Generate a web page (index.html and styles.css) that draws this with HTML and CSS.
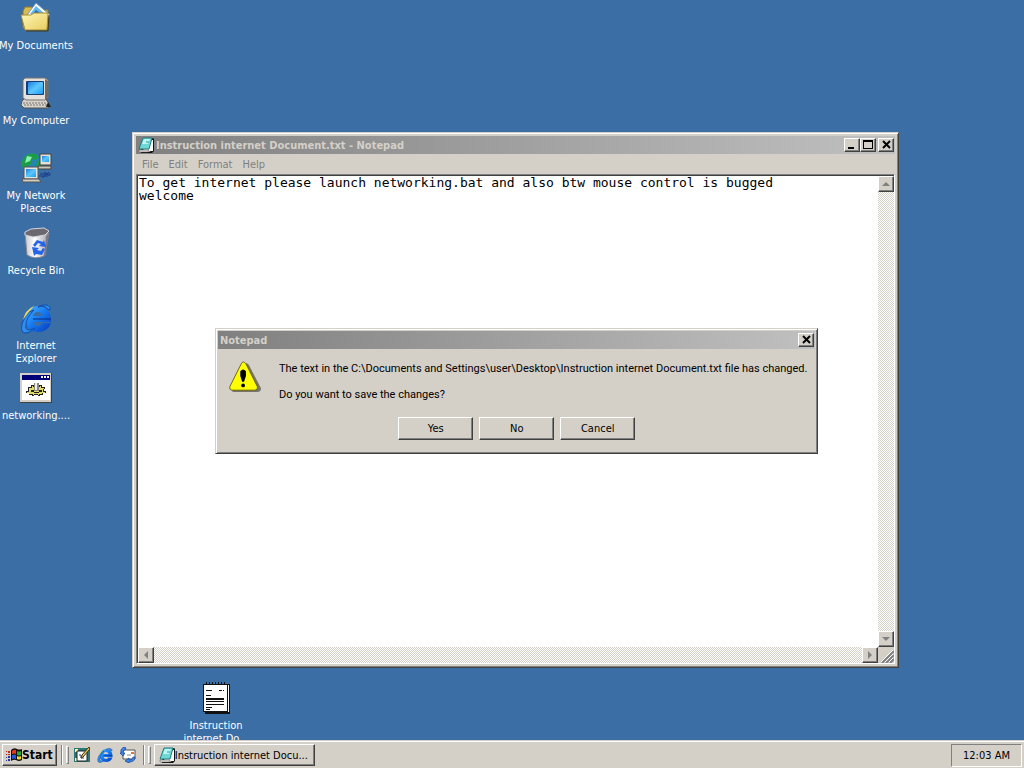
FILE: index.html
```html
<!DOCTYPE html>
<html lang="en">
<head>
<meta charset="utf-8">
<title>Desktop</title>
<link rel="stylesheet" href="styles.css">
</head>
<body>
<svg class="symbols" aria-hidden="true">
  <defs>
    <linearGradient id="screen" x1="0" y1="0" x2="1" y2="1">
      <stop offset="0" stop-color="#1d7fe0"/><stop offset=".5" stop-color="#5cc8ff"/><stop offset="1" stop-color="#1f9cf0"/>
    </linearGradient>
    <linearGradient id="folder" x1="0" y1="0" x2="1" y2="1">
      <stop offset="0" stop-color="#fff8b8"/><stop offset="1" stop-color="#e8cc60"/>
    </linearGradient>
    <linearGradient id="bin" x1="0" y1="0" x2="1" y2="0">
      <stop offset="0" stop-color="#c4c4cc"/><stop offset=".4" stop-color="#ffffff"/><stop offset="1" stop-color="#9c9cac"/>
    </linearGradient>
    <linearGradient id="blue-e" x1="0" y1="0" x2="1" y2="1">
      <stop offset="0" stop-color="#4cb8ff"/><stop offset=".5" stop-color="#1478f0"/><stop offset="1" stop-color="#0838b8"/>
    </linearGradient>
    <symbol id="i-computer" viewBox="0 0 32 32">
      <path d="M2 24l3-3h20l5 7-2 3H4l-3-3z" fill="#d8d4cc" stroke="#55504c"/>
      <path d="M3 26h23M4 28h23" stroke="#77726e" stroke-dasharray="2 1"/>
      <path d="M28 25l3 5h-5z" fill="#222"/>
      <path d="M3 3l2-2h20l3 2v17l-3 3H6l-3-2z" fill="#e4e0dc" stroke="#77706c"/>
      <path d="M25 2l3 2v16l-3 3z" fill="#716b68"/>
      <rect x="6" y="4" width="18" height="14" rx="1" fill="#183c78"/>
      <rect x="8" y="5" width="15" height="12" rx="1" fill="url(#screen)"/>
    </symbol>
    <symbol id="i-documents" viewBox="0 0 32 32">
      <path d="M3 9l2-4h7l2 3h14v18H3z" fill="#d8bc50" stroke="#8c7828"/>
      <path d="M7 13L16 1l14 12-6 9z" fill="#fff" stroke="#6c94bc"/>
      <path d="M10 12l6-8 9 8z" fill="#60b8ec"/>
      <path d="M13 12l3-4 5 4z" fill="#2c68a8"/>
      <path d="M1 13h10l3-2h14l-1 17H5z" fill="url(#folder)" stroke="#a88c30"/>
      <path d="M29 13l-1 16H6" fill="none" stroke="#40381c"/>
    </symbol>
    <symbol id="i-network" viewBox="0 0 32 32">
      <circle cx="12" cy="12" r="11" fill="#2484b4"/>
      <path d="M3 7Q8 0 16 2l3 3-4 3-3-1-1 5-4 2 1 6-4-2Q0 12 3 7zM17 9l4-1v7l-5 1z" fill="#1c9c44"/>
      <path d="M7 4l5 1-2 4-5 2z" fill="#8cf0b0"/>
      <path d="M20 2h11v11H20z" fill="#e4e0d4" stroke="#444"/>
      <path d="M22 4h7v6h-7z" fill="url(#screen)"/>
      <path d="M18 14h13v3H18z" fill="#c8c4b8" stroke="#444"/>
      <path d="M20 22h11M19 24h9M24 20l6 4M22 26l7-6" stroke="#183c88"/>
      <path d="M4 15h14v12H4z" fill="#e8e4d8" stroke="#555"/>
      <path d="M6 17h10v8H6z" fill="url(#screen)"/>
      <path d="M2 27h17l2 3H3z" fill="#d0ccc0" stroke="#555"/>
    </symbol>
    <symbol id="i-bin" viewBox="0 0 32 32">
      <path d="M5 6l2 22q8 5 17 1l5-23z" fill="url(#bin)" stroke="#888894"/>
      <path d="M26 9l3-3-3 22-2 2z" fill="#7c7884"/>
      <path d="M5 5l6-3 13-1 5 3-4 4-12 2-8-2z" fill="#6c6870" stroke="#d4d4dc"/>
      <path d="M13 18l4-5 6 2 1-2 2 7-7-1 2-2-3-1-3 4zM12 20l7 1-2 2 4 1 2-3 2 1-3 6-6-1-2 2z" fill="#2464e8"/>
    </symbol>
    <symbol id="i-ie" viewBox="0 0 32 32">
      <path d="M18 4C10 4 5 10 5 17s5 13 13 13c6 0 11-3 13-9h-9q-1 3-4 3-4 0-5-4h18C32 10 26 4 18 4zm-5 10q1-4 5-4 4 0 5 4z" fill="url(#blue-e)"/>
      <path d="M13 17h18" stroke="#082c80"/>
      <path d="M30 8c1-5-5-7-12-3 5-1 8-1 9 2zM9 10C1 19-1 30 5 31c4 0 8-3 10-5-6 3-10 3-9-3Q6 16 14 8z" fill="#2c90f0" stroke="#144cac"/>
      <path d="M3 18Q5 8 14 4L8 11z" fill="#e8d860"/>
    </symbol>
    <symbol id="i-batch" viewBox="0 0 32 32" shape-rendering="crispEdges">
      <path d="M0 1h32v30H0z" fill="#404040"/>
      <path d="M0 1h31v29H0z" fill="#d4d0c8"/>
      <path d="M2 3h28v5H2z" fill="#000078"/>
      <path d="M21 4h2v2h-2zM24 4h2v2h-2zM27 4h2v2h-2z" fill="#fff"/>
      <path d="M2 8h28v20H2z" fill="#fff"/>
      <path d="M8 15h3v-2h3v1h5v-1h3v2h3v2h-1v2h2v2h-3v2h-3v1h-2v-1h-4v1h-2v-1H9v-2H6v-2h2z" fill="#222"/>
      <path d="M9 16h3v-2h1v1h7v-1h1v2h3v1h-1v3h2v1h-3v1h-3v1h-1v-1h-4v1h-1v-1H9v-1H7v-1h2z" fill="#e0dc60"/>
      <path d="M11 18h3v2h-3zM19 18h3v2h-3zM14 20h5v1h-5z" fill="#222"/>
      <path d="M14 11h5v8h-5z" fill="#888"/><path d="M15 11h2v7h-2z" fill="#eee"/>
    </symbol>
    <symbol id="i-warning" viewBox="0 0 34 34">
      <path d="M16 3q2-2 5 1l13 25q0 4-4 4H6q-4 0-3-4z" fill="#77746e"/>
      <path d="M13 3q2-4 5 0l12 24q1 4-3 4H4q-4 0-3-4z" fill="#ffff00" stroke="#66600c"/>
      <path d="M12 11q3-4 6 0v5l-2 6h-2l-2-6z" fill="#000"/>
      <circle cx="15" cy="26" r="2" fill="#000"/>
    </symbol>
    <symbol id="i-text" viewBox="0 0 32 32" shape-rendering="crispEdges">
      <path d="M5 2h25v30H5z" fill="#111"/>
      <path d="M3 2h25v28H3z" fill="#111"/>
      <path d="M4 3h23v26H4z" fill="#fff"/>
      <path d="M28 3h1v27h-1z" fill="#fff"/>
      <path d="M6 0h1v3H6zM9 0h1v3H9zM12 0h1v3h-1zM15 0h1v3h-1zM18 0h1v3h-1zM21 0h1v3h-1zM24 0h1v3h-1z" fill="#111"/>
      <path d="M6 8h6v1H6zM19 8h3v1h-3zM23 8h1v1h-1zM6 13h5v1H6zM6 16h18v2H6zM6 19h18v1H6zM6 22h18v1H6zM6 25h6v1H6zM6 27h4v1H6z" fill="#111"/>
    </symbol>
    <symbol id="i-notepad" viewBox="0 0 16 16">
      <path d="M6 2l9-1 1 1v12l-2 2H3v-2z" fill="#111"/>
      <path d="M14 3h1v11h-2l-3 1-6-1z" fill="#fff"/>
      <path d="M5 1h9l-3 11H1z" fill="#70d8d4" stroke="#207c80"/>
      <path d="M6 2h6l-2 5H4z" fill="#b8f8f4"/>
      <path d="M8 5h3" stroke="#309098"/>
      <path d="M1 13h10l-1 2H1z" fill="#e4e0dc" stroke="#555" stroke-width=".5"/>
    </symbol>
    <symbol id="i-flag" viewBox="0 0 16 16">
      <path d="M5 3q3-3 6-1 3 1 5 0v11q-3 2-6 0-2-1-5 1z" fill="#111"/>
      <path d="M6 4q2-2 4-1v4q-2-1-4 0z" fill="#e83818"/>
      <path d="M11 4q2 1 4 0v4q-2 1-4 0z" fill="#28a838"/>
      <path d="M6 8q2-1 4 0v4q-2-1-4 0z" fill="#2858d8"/>
      <path d="M11 9q2 1 4 0v3q-2 1-4 0z" fill="#f0dc20"/>
      <path d="M0 4h1v1H0zM2 4h2v2H2zM0 7h1v1H0zM2 7h2v1H2z" fill="#c82818"/>
      <path d="M0 10h1v1H0zM2 9h2v2H2zM0 13h1v1H0zM2 12h2v2H2z" fill="#2038a0"/>
    </symbol>
    <symbol id="i-desk" viewBox="0 0 16 16">
      <path d="M0 1h16v14H0z" fill="#287878"/>
      <path d="M1 2h3v3H1zM1 11h3v3H1z" fill="#fff4b0"/>
      <path d="M3 4h10v10H3z" fill="#fff" stroke="#222"/>
      <path d="M7 11l1-3 7-8 1 2-7 8z" fill="#e8c860" stroke="#443010"/>
      <path d="M5 8h2v3h3" fill="none" stroke="#446"/>
    </symbol>
    <symbol id="i-mail" viewBox="0 0 16 16">
      <path d="M3 3h12v9H3z" fill="#fff" stroke="#555"/>
      <path d="M11 5h3v2h-3z" fill="#e87828"/>
      <path d="M7 8h4" stroke="#888"/>
      <path d="M5 0Q0 1 1 6H0l3 3 2-3H3q0-3 3-4z" fill="#3c88e8" stroke="#143c90" stroke-width=".7"/>
      <path d="M13 10q0 3-4 3v-2l-4 3 4 2v-1q6 0 6-5z" fill="#3c88e8" stroke="#143c90" stroke-width=".7"/>
    </symbol>
  </defs>
</svg>

<main class="desktop">
  <div class="icons">
    <a class="shortcut" href="#documents"><svg class="icon"><use href="#i-documents"/></svg><span class="single">My Documents</span></a>
    <a class="shortcut" href="#computer"><svg class="icon"><use href="#i-computer"/></svg><span>My Computer</span></a>
    <a class="shortcut" href="#network"><svg class="icon"><use href="#i-network"/></svg><span>My Network Places</span></a>
    <a class="shortcut" href="#bin"><svg class="icon"><use href="#i-bin"/></svg><span>Recycle Bin</span></a>
    <a class="shortcut" href="#ie"><svg class="icon"><use href="#i-ie"/></svg><span>Internet Explorer</span></a>
    <a class="shortcut" href="#networking"><svg class="icon"><use href="#i-batch"/></svg><span>networking....</span></a>
  </div>
  <a class="shortcut document" href="#instruction"><svg class="icon"><use href="#i-text"/></svg><span>Instruction internet Do...</span></a>

  <section class="window notepad" aria-label="Instruction internet Document.txt - Notepad">
    <header class="titlebar">
      <svg class="small-icon"><use href="#i-notepad"/></svg>
      <h1 class="title">Instruction internet Document.txt - Notepad</h1>
      <button class="control" aria-label="Minimize"><svg class="glyph" viewBox="0 0 12 10"><path d="M2 7h6v2H2z"/></svg></button>
      <button class="control" aria-label="Maximize"><svg class="glyph" viewBox="0 0 12 10"><path d="M1 0h10v9H1zM2 2v6h8V2z" fill-rule="evenodd"/></svg></button>
      <button class="control close" aria-label="Close"><svg class="glyph" viewBox="0 0 12 10"><path d="M3 1l7 7M10 1L3 8" stroke="#000" stroke-width="2"/></svg></button>
    </header>
    <nav class="menu">
      <button>File</button><button>Edit</button><button>Format</button><button>Help</button>
    </nav>
    <div class="editor">
      <textarea class="text" aria-label="Document text" spellcheck="false">To get internet please launch networking.bat and also btw mouse control is bugged
welcome</textarea>
      <div class="scroll vertical">
        <button class="arrow" aria-label="Scroll up"><svg class="glyph" viewBox="0 0 12 10"><path d="M2 7h8L6 3z"/></svg></button>
        <button class="arrow" aria-label="Scroll down"><svg class="glyph" viewBox="0 0 12 10"><path d="M2 3h8L6 7z"/></svg></button>
      </div>
      <div class="scroll">
        <button class="arrow" aria-label="Scroll left"><svg class="glyph" viewBox="0 0 12 10"><path d="M8 1v8L4 5z"/></svg></button>
        <button class="arrow" aria-label="Scroll right"><svg class="glyph" viewBox="0 0 12 10"><path d="M4 1v8l4-4z"/></svg></button>
      </div>
      <svg class="grip" viewBox="0 0 16 16"><path d="M4 16L16 4M8 16l8-8M12 16l4-4" stroke="#808080" stroke-width="2"/><path d="M3 15L15 3M7 15l8-8M11 15l4-4" stroke="#fff"/></svg>
    </div>
  </section>

  <section class="window dialog" role="alertdialog" aria-labelledby="dialog-title">
    <header class="titlebar">
      <h2 class="title" id="dialog-title">Notepad</h2>
      <button class="control" aria-label="Close"><svg class="glyph" viewBox="0 0 12 10"><path d="M3 1l7 7M10 1L3 8" stroke="#000" stroke-width="2"/></svg></button>
    </header>
    <div class="message">
      <svg class="warning"><use href="#i-warning"/></svg>
      <div class="copy">
        <p>The text in the C:\Documents and Settings\user\Desktop\Instruction internet Document.txt file has changed.</p>
        <p>Do you want to save the changes?</p>
      </div>
    </div>
    <div class="actions">
      <button class="push">Yes</button><button class="push">No</button><button class="push">Cancel</button>
    </div>
  </section>
</main>

<footer class="taskbar">
  <button class="start"><svg class="small-icon"><use href="#i-flag"/></svg>Start</button>
  <i class="divider"></i><i class="handle"></i>
  <div class="quick">
    <button aria-label="Show Desktop"><svg class="small-icon"><use href="#i-desk"/></svg></button>
    <button aria-label="Internet Explorer"><svg class="small-icon"><use href="#i-ie"/></svg></button>
    <button aria-label="Outlook Express"><svg class="small-icon"><use href="#i-mail"/></svg></button>
  </div>
  <i class="divider"></i><i class="handle"></i>
  <button class="task"><svg class="small-icon"><use href="#i-notepad"/></svg>Instruction internet Docu...</button>
  <time class="clock">12:03 AM</time>
</footer>
</body>
</html>
```

FILE: styles.css
```css
* { box-sizing: border-box; }

body {
  margin: 0;
  height: 100vh;
  display: flex;
  flex-direction: column;
  overflow: hidden;
  background: #3a6ea5;
  color: #000;
  font: 11px/13px "DejaVu Sans Condensed", "DejaVu Sans", sans-serif;
}

button {
  margin: 0;
  padding: 0;
  border: 0;
  background: #d4d0c8;
  color: inherit;
  font: inherit;
}

h1, h2, p { margin: 0; }

.symbols { position: absolute; width: 0; height: 0; }
.icon { width: 32px; height: 32px; }
.small-icon { width: 16px; height: 16px; flex: none; }
.glyph { width: 12px; height: 10px; display: block; }

.desktop { position: relative; flex: 1; min-height: 0; overflow: hidden; }

.icons {
  padding-top: 2px;
  display: grid;
  grid-template-columns: 72px;
  grid-template-rows: repeat(4, 75px) 70px 70px;
}

.shortcut {
  display: flex;
  flex-direction: column;
  align-items: center;
  gap: 5px;
  color: #fff;
  text-align: center;
  text-decoration: none;
}

.single { white-space: nowrap; }
.document { position: absolute; left: 180px; top: 682px; width: 72px; }

.window {
  position: absolute;
  display: flex;
  flex-direction: column;
  padding: 2px;
  background: #d4d0c8;
  border: 1px solid;
  border-color: #d4d0c8 #404040 #404040 #d4d0c8;
  box-shadow: inset 1px 1px #fff, inset -1px -1px #808080;
}

.notepad { inset: 132px 125px 72px 132px; padding: 3px; }

.titlebar {
  height: 18px;
  flex: none;
  display: flex;
  align-items: center;
  padding: 0 1px 0 2px;
  background: linear-gradient(90deg, #808080, #c0c0c0);
}

.title { flex: 1; padding-left: 2px; color: #d4d0c8; font-size: 11px; font-weight: bold; }

.control, .arrow, .push, .start, .task {
  border: 1px solid;
  border-color: #fff #404040 #404040 #fff;
  box-shadow: inset -1px -1px #808080;
}

.control { width: 16px; height: 14px; padding: 1px; }
.close { margin-left: 2px; }

.menu { height: 20px; flex: none; display: flex; align-items: center; padding-left: 1px; }
.menu button { padding: 0 5px; color: #808080; }

.editor {
  flex: 1;
  min-height: 0;
  display: grid;
  grid-template: 1fr 16px / 1fr 16px;
  border: 1px solid;
  border-color: #808080 #fff #fff #808080;
  box-shadow: inset 1px 1px #404040;
  padding: 1px 0 0 1px;
}

.text {
  min-width: 0;
  padding: 0 1px;
  border: 0;
  outline: 0;
  resize: none;
  overflow: hidden;
  background: #fff;
  color: #000;
  font: 13px/13px "DejaVu Sans Mono", monospace;
}

.scroll {
  display: flex;
  justify-content: space-between;
  background: repeating-conic-gradient(#fff 0 25%, #d4d0c8 0 50%) 0 0 / 2px 2px;
}

.vertical { flex-direction: column; }
.arrow { width: 16px; height: 16px; padding: 1px; fill: #808080; }
.grip { width: 16px; height: 16px; }

.dialog { left: 215px; top: 328px; padding-bottom: 13px; }
.dialog .title { padding-left: 0; }

.message { display: flex; gap: 18px; padding: 11px 8px 0 11px; }
.warning { width: 32px; height: 34px; }
.copy { display: grid; gap: 13px; padding-top: 2px; white-space: nowrap; font-family: Roboto, sans-serif; }

.actions { display: flex; justify-content: center; gap: 6px; padding-top: 16px; }
.push { width: 75px; height: 23px; }

.taskbar {
  flex: none;
  display: flex;
  align-items: center;
  height: 28px;
  padding: 3px 2px 1px;
  background: #d4d0c8;
  box-shadow: inset 0 1px #d4d0c8, inset 0 2px #fff;
}

.start, .task { display: flex; align-items: center; height: 22px; padding: 0 4px; }
.start { padding: 0 3px; font-size: 12px; font-weight: bold; }
.task { width: 161px; white-space: nowrap; }

.divider { width: 2px; height: 20px; margin: 0 3px 0 4px; border-left: 1px solid #808080; border-right: 1px solid #fff; }
.handle { width: 3px; height: 18px; border: 1px solid; border-color: #fff #808080 #808080 #fff; }

.quick { display: flex; gap: 7px; padding: 0 3px 0 5px; }
.quick button { height: 16px; }
.handle + .task { margin-left: 3px; }

.clock {
  margin-left: auto;
  padding: 4px 11px;
  border: 1px solid;
  border-color: #808080 #fff #fff #808080;
}
```
